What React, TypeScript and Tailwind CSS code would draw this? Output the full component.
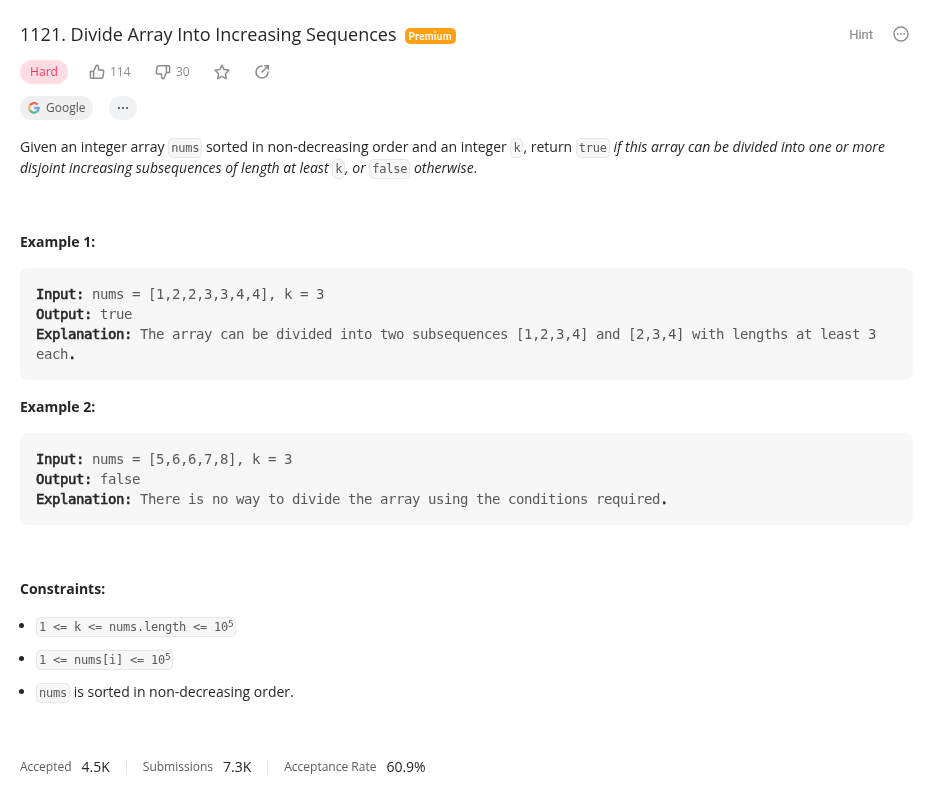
import type { ReactNode } from 'react';

const Code = ({ children }: { children: ReactNode }) => (
  <code className="rounded-[5px] border border-[#e7e7e8] bg-[#f7f7f8] px-[2px] py-[2px] font-['DejaVu_Sans_Mono',monospace] text-[12px] leading-[18px] tracking-[-0.224px] whitespace-pre text-[#595959] not-italic">
    {children}
  </code>
);

const Label = ({ children }: { children: ReactNode }) => (
  <span className="text-[#262626] [-webkit-text-stroke:0.6px_#262626]">{children}</span>
);

const Block = ({ children }: { children: ReactNode }) => (
  <pre className="rounded-lg bg-[#f7f7f7] p-4 font-['DejaVu_Sans_Mono',monospace] text-[14px] leading-5 tracking-[-0.428px] whitespace-pre-wrap text-[#595959]">
    {children}
  </pre>
);

const Sup = () => <sup className="relative -top-[4px] align-baseline text-[9.5px] leading-none tracking-[-0.5px]">5</sup>;

const Item = ({ children }: { children: ReactNode }) => (
  <li className="flex h-[21px] items-center">
    <span className="mr-3 -ml-px size-[5px] shrink-0 rounded-full bg-[#262626]" />
    <span className="whitespace-pre">{children}</span>
  </li>
);

const Stat = ({ label, value }: { label: string; value: string }) => (
  <div className="flex items-center gap-[10px]">
    <span className="text-[12px] text-[#5c5c5c]">{label}</span>
    <span className="text-[14px] text-[#262626]">{value}</span>
  </div>
);

const Thumb = ({ className = '' }: { className?: string }) => (
  <svg className={`size-4 ${className}`} viewBox="0 0 16 16" fill="none" stroke="#8c8c8c" strokeWidth="1.5" strokeLinejoin="round">
    <path d="M1.4 7.4h3.2v6.9H2.4a1 1 0 0 1-1-1zM4.6 7.4 7.3 1.3c1.3 0 2.2.9 2.2 2.2v2.6h4c.8 0 1.3.6 1.2 1.4l-.8 5.7c-.1.7-.6 1.1-1.3 1.1h-8" />
  </svg>
);

export default function App() {
  return (
    <main className="h-[790px] w-[933px] overflow-hidden px-5 pt-[22px] font-['Open_Sans',sans-serif] text-[14px] leading-[21px] text-[#262626] will-change-transform">
      <header className="flex h-6 items-center">
        <h1 className="text-[18px] leading-6 whitespace-nowrap">1121. Divide Array Into Increasing Sequences</h1>
        <span className="mt-[4px] ml-2 flex h-4 w-[51px] items-center justify-center rounded-[5px] bg-[#ffa116] font-['Lato',sans-serif] text-[10.5px] font-bold tracking-[0.2px] text-white">Premium</span>
        <span className="ml-auto font-['Roboto',sans-serif] text-[13px] text-[#8c8c8c] [-webkit-text-stroke:0.2px_#8c8c8c]">Hint</span>
        <svg className="mr-1 ml-5 size-4" viewBox="0 0 16 16" fill="none" stroke="#8c8c8c" strokeWidth="1.4">
          <circle cx="8" cy="8" r="7" />
          <path d="M4 8h1.6M7.2 8h1.6M10.4 8H12" strokeWidth="1.6" />
        </svg>
      </header>
      <div className="mt-[14px] flex h-6 items-center text-[12px] text-[#8c8c8c]">
        <span className="flex h-6 w-12 items-center justify-center rounded-full bg-[#ffdce4] pb-[2px] text-[#ff375f]">Hard</span>
        <Thumb className="mr-[5px] ml-[21px]" />
        <span className="w-[21px] pb-[2px]">114</span>
        <Thumb className="mr-[5px] ml-[24px] rotate-180" />
        <span className="w-[14px] pb-[2px]">30</span>
        <svg className="ml-6 size-4" viewBox="0 0 16 16" fill="none" stroke="#8c8c8c" strokeWidth="1.5" strokeLinejoin="round">
          <path d="m8 1.2 2.1 4.4 4.8.7-3.5 3.4.9 4.9L8 12.3l-4.3 2.3.9-4.9L1.1 6.3l4.8-.7z" />
        </svg>
        <svg className="ml-6 size-4" viewBox="0 0 16 16" fill="none" stroke="#8c8c8c" strokeWidth="1.6">
          <path d="M8.5 2H8a6 6 0 1 0 6 6v-.5M7.5 8.5 14 2M10.3 1.8h3.9v3.9" />
        </svg>
      </div>
      <div className="mt-3 flex h-6 items-center gap-4 text-[12px] text-[#595959]">
        <span className="flex h-6 w-[73px] items-center gap-1.5 rounded-full bg-[#f0f0f0] pl-2">
          <svg className="size-3" viewBox="0 0 12 12" fill="none" strokeWidth="2.3">
            <path d="M9.6 2.6A4.7 4.7 0 0 0 2 3.4" stroke="#ea6d63" />
            <path d="M2 3.4A4.7 4.7 0 0 0 1.9 8.3" stroke="#e9bd63" />
            <path d="M1.9 8.3a4.7 4.7 0 0 0 6.8 1.5" stroke="#58ba8a" />
            <path d="M8.7 9.8A4.7 4.7 0 0 0 10.7 6H6.2" stroke="#6ba9d8" />
          </svg>
          <span className="pb-[2px]">Google</span>
        </span>
        <span className="flex h-6 w-7 items-center justify-center gap-[2px] rounded-full bg-[#f1f2f4]">
          <i className="size-[2px] bg-[#6b6b6b]" />
          <i className="size-[2px] bg-[#6b6b6b]" />
          <i className="size-[2px] bg-[#6b6b6b]" />
        </span>
      </div>
      <p className="mt-4 h-[42px] whitespace-nowrap">
        Given an integer array <Code>nums</Code> sorted in non-decreasing order and an integer <Code>k</Code>, return <Code>true</Code> <em>if this array can be divided into one or more</em>
        <br />
        <em>disjoint increasing subsequences of length at least </em><Code>k</Code><em>, or </em><Code>false</Code><em> otherwise</em>.
      </p>
      <h2 className="mt-[53px] font-bold">Example 1:</h2>
      <div className="mt-4">
        <Block>
          <Label>Input:</Label>{' nums = [1,2,2,3,3,4,4], k = 3\n'}
          <Label>Output:</Label>{' true\n'}
          <Label>Explanation:</Label>{' The array can be divided into two subsequences [1,2,3,4] and [2,3,4] with lengths at least 3 each'}<Label>.</Label>
        </Block>
      </div>
      <h2 className="mt-4 font-bold">Example 2:</h2>
      <div className="mt-4">
        <Block>
          <Label>Input:</Label>{' nums = [5,6,6,7,8], k = 3\n'}
          <Label>Output:</Label>{' false\n'}
          <Label>Explanation:</Label>{' There is no way to divide the array using the conditions required'}<Label>.</Label>
        </Block>
      </div>
      <h2 className="mt-[53px] font-bold">Constraints:</h2>
      <ul className="mt-4 flex flex-col gap-3">
        <Item><Code>{'1 <= k <= nums.length <= 10'}<Sup /></Code></Item>
        <Item><Code>{'1 <= nums[i] <= 10'}<Sup /></Code></Item>
        <Item><Code>nums</Code> is sorted in non-decreasing order.</Item>
      </ul>
      <footer className="mt-[54px] flex h-[21px] items-center">
        <Stat label="Accepted" value="4.5K" />
        <span className="mx-4 h-[14px] w-px bg-[#e5e5e5]" />
        <Stat label="Submissions" value="7.3K" />
        <span className="mx-4 h-[14px] w-px bg-[#e5e5e5]" />
        <Stat label="Acceptance Rate" value="60.9%" />
      </footer>
    </main>
  );
}
